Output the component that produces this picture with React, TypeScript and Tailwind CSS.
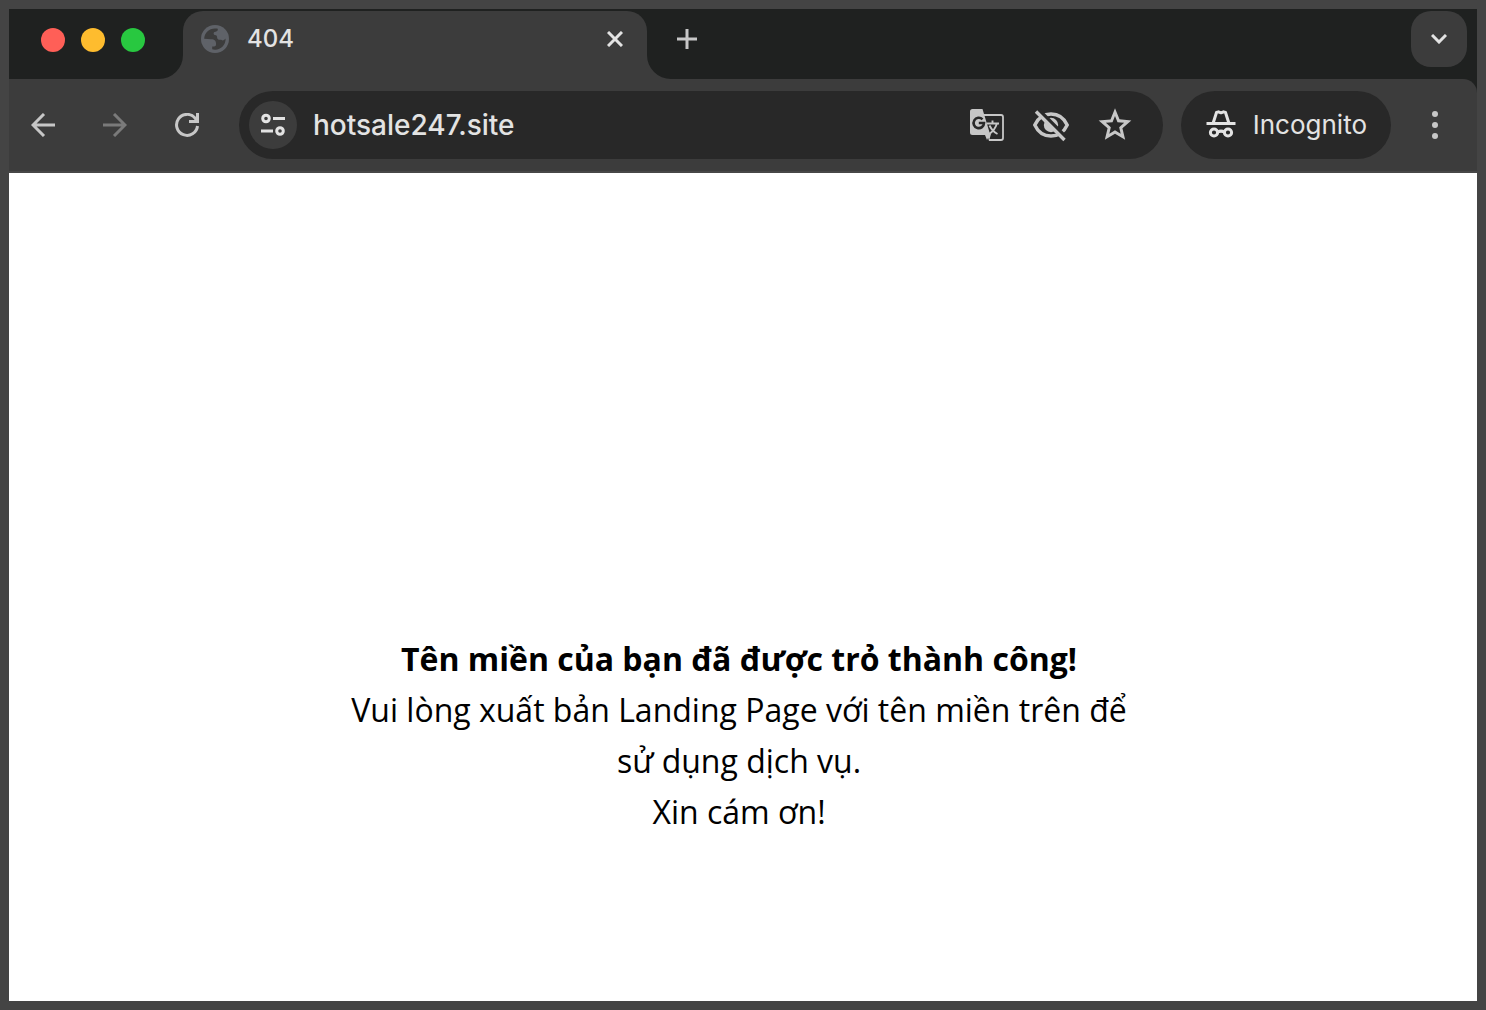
import { useState } from "react";

const Globe = () => (
  <svg viewBox="0 0 28 28" className="size-7 shrink-0" aria-hidden="true">
    <circle cx="14" cy="14" r="14" fill="#5f6268" />
    <path
      d="M3.200 13.800C3.300 8 8 3.500 14 3.400c1 0 2 .1 2.800.4.200 1.600-.3 2.700-2.300 2.900-1.700.1-2 1-1.800 2.300.2 1.300 2.300.6 3 1.800.7 1.300 0 2.800 1.600 3.700 1.300.8 2.200-.2 3.400.6 1.300.8 2.800-.2 3.900-1.600C24.800 19.800 20 24.800 14 24.700c-1 0-2-.1-2.800-.4v-2.900c2 0 3.900.1 3.900-2.200 0-3.600-1.600-4.700-4.800-4.900z"
      fill="#3c3c3c"
    />
  </svg>
);

const TuneIcon = () => (
  <svg viewBox="0 0 24 24" className="size-6" fill="none" stroke="#e3e3e3" strokeWidth="3" aria-hidden="true">
    <circle cx="5" cy="5.500" r="3.300" />
    <path d="M12 5.500h12M0 18h12" />
    <circle cx="19" cy="18" r="3.300" />
  </svg>
);

const TranslateIcon = () => (
  <svg viewBox="0 0 34 34" className="size-[34px]" aria-hidden="true">
    <path d="M14 7h17a2 2 0 0 1 2 2v21a2 2 0 0 1-2 2H19" fill="none" stroke="#c7c7c7" strokeWidth="1.800" />
    <path d="M2.500 1H12.500l7.500 25-3 6-2-5H2.500A2.500 2.500 0 0 1 0 24.500v-21A2.500 2.500 0 0 1 2.500 1z" fill="#c7c7c7" />
    <path d="M17 26h4l-2 7z" fill="#c7c7c7" />
    <path d="M12.500 11.300A5.200 5.200 0 1 0 14 15H8.800" fill="none" stroke="#282828" strokeWidth="2.600" />
    <path d="M16.500 15.500h12.500M22.500 12.500v3M27 15.500c-1.500 4.500-4.500 8.500-8 10.500M19.500 17.500c2 4 5 7 8 8.500" fill="none" stroke="#c7c7c7" strokeWidth="1.900" />
  </svg>
);

const EyeOffIcon = () => (
  <svg viewBox="0 0 36 34" className="h-[34px] w-9" fill="none" stroke="#c7c7c7" strokeWidth="3.400" aria-hidden="true">
    <path d="M1.800 17C5 10 11 6 18 6S31 10 34.200 17C31 24 25 28 18 28S5 24 1.800 17z" />
    <circle cx="18" cy="17" r="7.200" fill="#c7c7c7" stroke="none" />
    <path d="M5.500 2 33.500 30" stroke="#282828" strokeWidth="4" />
    <path d="M3 3.500 31.500 32" />
  </svg>
);

const StarIcon = () => (
  <svg viewBox="0 0 24 24" className="size-10" fill="#c7c7c7" aria-hidden="true">
    <path d="M21.800 9.240l-7.100-.62L12 2 9.300 8.630 2.200 9.240l5.350 4.700L5.900 20.900 12 17.250 18.100 20.900l-1.650-6.960L21.800 9.240zM12 15.100l-3.400 2.100.9-3.900-3-2.650 4-.35L12 6.600l1.500 3.700 4 .35-3 2.650.9 3.900L12 15.100z" />
  </svg>
);

const IncognitoIcon = () => (
  <svg viewBox="0 -1 30 30" className="size-[30px]" fill="none" stroke="#e3e3e3" strokeWidth="3" aria-hidden="true">
    <path d="M.5 12.500h29" />
    <path d="M7 12.500 10.500 1.500 12.500 .8l2.500 1 2.500-1 2 .7L23 12.500" strokeLinejoin="round" />
    <circle cx="8" cy="21.500" r="3.600" />
    <circle cx="22" cy="21.500" r="3.600" />
    <path d="M11.500 21c2-1 5-1 7 0" />
  </svg>
);

const TabStrip = () => (
  <div className="flex h-[70px] items-start">
    <div className="flex w-[174px] shrink-0 gap-4 pt-[19px] pl-8">
      <button aria-label="Close window" className="size-6 rounded-full bg-[#ff5f57]" />
      <button aria-label="Minimize window" className="size-6 rounded-full bg-[#febc2e]" />
      <button aria-label="Zoom window" className="size-6 rounded-full bg-[#28c840]" />
    </div>
    <div className="relative mt-0.5 flex h-[68px] w-[464px] items-start rounded-t-[20px] bg-[#3c3c3c] pt-[14px] pr-5 pl-[18px]">
      <svg viewBox="0 0 24 24" className="absolute bottom-0 -left-6 size-6" fill="#3c3c3c" aria-hidden="true">
        <path d="M24 0v24H0A24 24 0 0 0 24 0z" />
      </svg>
      <svg viewBox="0 0 24 24" className="absolute -right-6 bottom-0 size-6" fill="#3c3c3c" aria-hidden="true">
        <path d="M0 0v24h24A24 24 0 0 1 0 0z" />
      </svg>
      <Globe />
      <span className="ml-[18px] flex-1 text-2xl leading-7 font-medium text-[#e3e3e3]">404</span>
      <button aria-label="Close tab" className="mt-0.5 flex size-6 items-center justify-center">
        <svg viewBox="0 0 16 16" className="size-4" stroke="#e3e3e3" strokeWidth="3" aria-hidden="true">
          <path d="M1 1l14 14M15 1 1 15" />
        </svg>
      </button>
    </div>
    <button aria-label="New tab" className="mt-5 ml-[30px]">
      <svg viewBox="0 0 20 20" className="size-5" stroke="#c7c7c7" strokeWidth="3" aria-hidden="true">
        <path d="M10 0v20M0 10h20" />
      </svg>
    </button>
    <button aria-label="Search tabs" className="mt-0.5 mr-2.5 ml-auto flex size-14 items-center justify-center rounded-[20px] bg-[#3c3c3c]">
      <svg viewBox="0 0 16 10" className="h-2.5 w-4" fill="none" stroke="#e3e3e3" strokeWidth="3" aria-hidden="true">
        <path d="M1 1l7 7 7-7" />
      </svg>
    </button>
  </div>
);

const Toolbar = () => {
  const [url, setUrl] = useState("hotsale247.site");

  return (
    <div className="flex h-[94px] items-center rounded-tr-[14px] border-b-2 border-[#474747] bg-[#3c3c3c] pr-[38px] pl-[22px]">
      <button aria-label="Back">
        <svg viewBox="0 0 24 24" className="size-6" fill="none" stroke="#c7c7c7" strokeWidth="3" aria-hidden="true">
          <path d="M24 12H2M13 1 2 12l11 11" />
        </svg>
      </button>
      <button aria-label="Forward" disabled className="ml-12">
        <svg viewBox="0 0 24 24" className="size-6" fill="none" stroke="#7a7a7a" strokeWidth="3" aria-hidden="true">
          <path d="M0 12h22M11 1l11 11-11 11" />
        </svg>
      </button>
      <button aria-label="Reload" className="ml-12">
        <svg viewBox="0 0 24 24" className="size-6" fill="none" stroke="#c7c7c7" strokeWidth="3" aria-hidden="true">
          <path d="M22.500 13A10.500 10.500 0 1 1 20 5L22 8M22.500 0v8.500H14" />
        </svg>
      </button>
      <div className="ml-10 flex h-[68px] flex-1 items-center rounded-full bg-[#282828] pr-7 pl-2.5">
        <button aria-label="View site information" className="flex size-12 shrink-0 items-center justify-center rounded-full bg-[#3c3c3c]">
          <TuneIcon />
        </button>
        <input
          aria-label="Address"
          value={url}
          onChange={(e) => setUrl(e.target.value)}
          className="ml-4 min-w-0 flex-1 bg-transparent text-[28px] leading-9 font-medium text-[#e3e3e3] outline-none"
        />
        <div className="flex items-center">
          <button aria-label="Translate this page">
            <TranslateIcon />
          </button>
          <button aria-label="Third-party cookies blocked" className="ml-[29px]">
            <EyeOffIcon />
          </button>
          <button aria-label="Bookmark this tab" className="ml-[26px]">
            <StarIcon />
          </button>
        </div>
      </div>
      <button className="ml-[18px] flex h-[68px] items-center rounded-full bg-[#282828] pr-6 pl-[25px] text-[26px] leading-8 text-[#e3e3e3]">
        <IncognitoIcon />
        <span className="ml-[17px]">Incognito</span>
      </button>
      <button aria-label="Menu" className="ml-10">
        <svg viewBox="0 0 8 28" className="h-7 w-2" fill="#c7c7c7" aria-hidden="true">
          <circle cx="4" cy="3" r="3" />
          <circle cx="4" cy="14" r="3" />
          <circle cx="4" cy="25" r="3" />
        </svg>
      </button>
    </div>
  );
};

const App = () => {
  return (
    <div className="flex min-h-screen flex-col bg-[#444444] p-[9px]">
      <div className="flex flex-1 flex-col bg-[#1f2120]">
        <header className="font-['Inter',sans-serif]">
          <TabStrip />
          <Toolbar />
        </header>
        <main className="flex-1 bg-white pt-[460px] pr-2 pb-10 font-['Open_Sans',sans-serif]">
          <div className="mx-auto max-w-[800px] text-center text-[32px] leading-[51px] text-black">
            <h1 className="font-bold">Tên miền của bạn đã được trỏ thành công!</h1>
            <p>Vui lòng xuất bản Landing Page với tên miền trên để sử dụng dịch vụ.</p>
            <p>Xin cám ơn!</p>
          </div>
        </main>
      </div>
    </div>
  );
};

export default App;
